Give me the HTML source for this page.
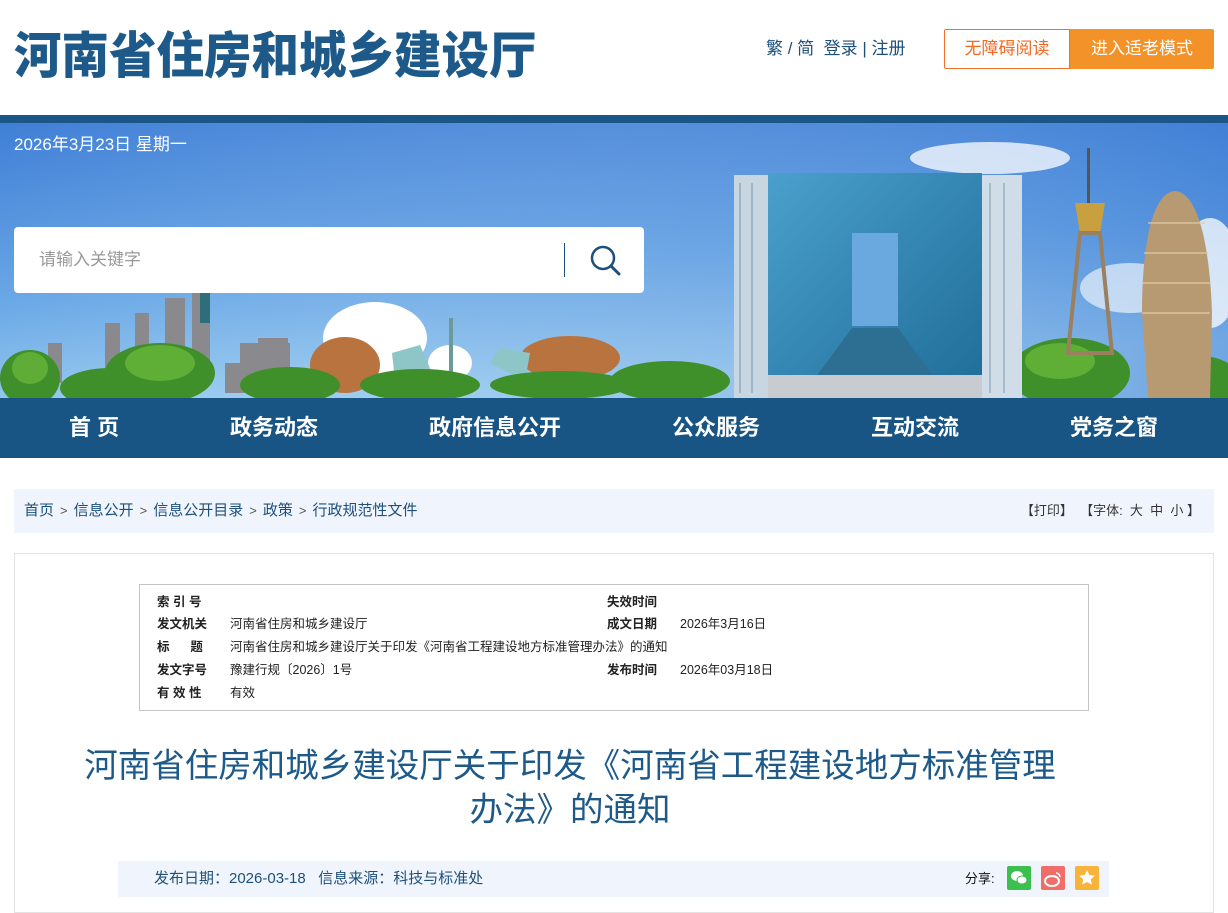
<!DOCTYPE html>
<html><head><meta charset="utf-8"><style>
*{margin:0;padding:0;box-sizing:border-box}
body{width:1228px;height:905px;overflow:hidden;background:#fff;font-family:"Liberation Sans","Noto Sans CJK SC",sans-serif;position:relative}
.abs{position:absolute}
.logo{left:14px;top:20px;font-family:"Noto Sans CJK SC",sans-serif;font-weight:900;font-size:50px;color:#1d5a8a;line-height:64px;transform:scaleX(0.95);transform-origin:left;white-space:nowrap}
.tl{top:37px;left:766px;font-size:17px;color:#1d4f7c;line-height:24px}
.btn1{left:944px;top:29px;width:126px;height:40px;border:1px solid #f0722a;color:#f06a24;font-size:17px;text-align:center;line-height:38px;border-radius:2px 0 0 2px}
.btn2{left:1070px;top:29px;width:144px;height:40px;background:#f4922a;color:#fff;font-size:17px;text-align:center;line-height:40px;border-radius:0 2px 2px 0}
.bar{left:0;top:115px;width:1228px;height:8px;background:#1a5687}
.nav{left:0;top:398px;width:1228px;height:60px;background:#185585}
.nav span{position:absolute;top:0;line-height:60px;color:#fff;font-weight:bold;font-size:22px}
.crumb{left:14px;top:489px;width:1200px;height:44px;background:#f0f5fd;font-size:15px;color:#1d4f7c;line-height:44px;padding-left:10px}
.crumb b{font-weight:normal;color:#555;margin:0 6px;font-size:13px}
.tools{right:28px;top:489px;line-height:44px;font-size:13px;color:#333;position:absolute}
.box{left:14px;top:553px;width:1200px;height:360px;border:1px solid #e3e3e3}
.info{left:139px;top:584px;width:950px;height:127px;border:1px solid #c4c4c4;font-size:12.5px;color:#222}
.info div{position:absolute;line-height:20px;white-space:nowrap}
.info .k{font-weight:bold}
.title{left:0;top:745px;width:1140px;text-align:center;font-size:33.5px;color:#1d5a8a;line-height:44px;white-space:nowrap}
.meta{left:118px;top:861px;width:991px;height:36px;background:#f0f5fd;font-size:15px;color:#1d4f7c;line-height:36px;padding-left:36px}
.ic{position:absolute;top:866px;width:24px;height:24px;border-radius:2px}
</style></head><body>
<div class="abs logo">河南省住房和城乡建设厅</div>
<div class="abs tl">繁 / 简 &nbsp;登录 | 注册</div>
<div class="abs btn1">无障碍阅读</div>
<div class="abs btn2">进入适老模式</div>
<div class="abs bar"></div>
<svg class="abs" style="left:0;top:123px" width="1228" height="275" viewBox="0 0 1228 275">
<defs><linearGradient id="sky" x1="0" y1="0" x2="0.3" y2="1"><stop offset="0" stop-color="#3f7fd6"/><stop offset="0.6" stop-color="#6aa8e6"/><stop offset="1" stop-color="#9ccdf0"/></linearGradient>
<linearGradient id="sky2" x1="0" y1="0" x2="1" y2="0"><stop offset="0" stop-color="#fff" stop-opacity="0"/><stop offset="1" stop-color="#1f5fc8" stop-opacity="0.35"/></linearGradient>
<linearGradient id="glass" x1="0" y1="0" x2="1" y2="1"><stop offset="0" stop-color="#4aa0cc"/><stop offset="1" stop-color="#1f6c98"/></linearGradient></defs>
<rect width="1228" height="275" fill="url(#sky)"/><rect width="1228" height="275" fill="url(#sky2)"/>
<ellipse cx="990" cy="35" rx="80" ry="16" fill="#fff" opacity="0.75"/>
<ellipse cx="1210" cy="150" rx="30" ry="55" fill="#fff" opacity="0.75"/>
<ellipse cx="1130" cy="165" rx="50" ry="25" fill="#fff" opacity="0.6"/>
<ellipse cx="375" cy="215" rx="52" ry="36" fill="#fff"/>
<ellipse cx="450" cy="240" rx="22" ry="18" fill="#fff"/>
<g fill="#8a8a8e"><rect x="48" y="220" width="14" height="40"/><rect x="105" y="200" width="15" height="60"/><rect x="135" y="190" width="14" height="70"/><rect x="165" y="175" width="20" height="85"/><rect x="192" y="165" width="18" height="97"/><rect x="225" y="240" width="25" height="30"/><rect x="240" y="220" width="50" height="50"/><rect x="258" y="215" width="30" height="55"/></g>
<rect x="200" y="165" width="10" height="35" fill="#2e6e7a"/>
<ellipse cx="345" cy="242" rx="35" ry="28" fill="#b8733f"/>
<ellipse cx="570" cy="235" rx="50" ry="22" fill="#b8733f"/>
<path d="M392 230 L420 222 L432 250 L395 258Z" fill="#8ec6c8"/>
<path d="M490 240 L500 225 L530 230 L525 258Z" fill="#8ec6c8"/>
<rect x="449" y="195" width="4" height="65" fill="#6a9a9a"/>
<g fill="#3f8f2a"><ellipse cx="30" cy="255" rx="30" ry="28"/><ellipse cx="160" cy="250" rx="55" ry="30"/><ellipse cx="110" cy="265" rx="50" ry="20"/><ellipse cx="290" cy="262" rx="50" ry="18"/><ellipse cx="420" cy="262" rx="60" ry="16"/><ellipse cx="560" cy="262" rx="70" ry="14"/><ellipse cx="670" cy="258" rx="60" ry="20"/><ellipse cx="1070" cy="250" rx="60" ry="35"/><ellipse cx="1200" cy="258" rx="40" ry="25"/></g>
<g fill="#68b53a" opacity="0.8"><ellipse cx="160" cy="240" rx="35" ry="18"/><ellipse cx="1060" cy="238" rx="35" ry="18"/><ellipse cx="30" cy="245" rx="18" ry="16"/></g>
<rect x="734" y="52" width="34" height="223" fill="#c8d6e2"/>
<rect x="982" y="52" width="40" height="223" fill="#d0dde8"/>
<rect x="768" y="50" width="214" height="225" fill="url(#glass)"/>
<rect x="852" y="110" width="46" height="93" fill="#6aa8e0"/>
<path d="M815 255 L852 205 L898 205 L935 255Z" fill="#2d6f92"/>
<rect x="768" y="252" width="214" height="23" fill="#c8ccd0"/>
<g stroke="#3e6e8e" stroke-width="1" opacity="0.6"><line x1="740" y1="60" x2="740" y2="270"/><line x1="752" y1="60" x2="752" y2="270"/><line x1="990" y1="60" x2="990" y2="270"/><line x1="1004" y1="60" x2="1004" y2="270"/></g>
<rect x="1087" y="25" width="3" height="55" fill="#555"/>
<path d="M1075 80 L1105 80 L1100 110 L1080 110Z" fill="#c9a040"/>
<path d="M1080 110 L1100 110 L1112 230 L1068 230Z" fill="none" stroke="#9a8060" stroke-width="4"/>
<path d="M1175 68 C1200 70 1210 130 1212 190 L1210 275 L1148 275 L1142 190 C1142 130 1150 70 1175 68Z" fill="#b89a72"/>
<g stroke="#e0cca8" stroke-width="2" opacity="0.6"><line x1="1148" y1="100" x2="1205" y2="100"/><line x1="1144" y1="130" x2="1208" y2="130"/><line x1="1142" y1="160" x2="1210" y2="160"/><line x1="1142" y1="190" x2="1210" y2="190"/></g>
</svg>
<div class="abs" style="left:14px;top:133px;color:#fff;font-size:17px;line-height:24px">2026年3月23日 星期一</div>
<div class="abs" style="left:14px;top:227px;width:630px;height:66px;background:#fff;border-radius:4px">
<div class="abs" style="left:25px;top:0;line-height:66px;font-size:17px;color:#999">请输入关键字</div>
<div class="abs" style="left:550px;top:16px;width:1px;height:34px;background:#1d4f7c"></div>
<svg class="abs" style="left:574px;top:16px" width="36" height="36" viewBox="0 0 36 36"><circle cx="15" cy="15" r="11" fill="none" stroke="#1d4f7c" stroke-width="2.5"/><line x1="23" y1="23" x2="31" y2="31" stroke="#1d4f7c" stroke-width="3" stroke-linecap="round"/></svg>
</div>
<div class="abs nav"><span style="left:69px">首 页</span><span style="left:230px">政务动态</span><span style="left:429px">政府信息公开</span><span style="left:672px">公众服务</span><span style="left:871px">互动交流</span><span style="left:1070px">党务之窗</span></div>
<div class="abs crumb">首页<b>&gt;</b>信息公开<b>&gt;</b>信息公开目录<b>&gt;</b>政策<b>&gt;</b>行政规范性文件</div>
<div class="tools">【打印】 &nbsp;【字体: &nbsp;大 &nbsp;中 &nbsp;小 】</div>
<div class="abs box"></div>
<div class="abs info">
<div class="k" style="left:17px;top:7px">索 引 号</div>
<div class="k" style="left:467px;top:7px">失效时间</div>
<div class="k" style="left:17px;top:29px">发文机关</div><div style="left:90px;top:29px">河南省住房和城乡建设厅</div>
<div class="k" style="left:467px;top:29px">成文日期</div><div style="left:540px;top:29px">2026年3月16日</div>
<div class="k" style="left:17px;top:52px">标 &nbsp; &nbsp; &nbsp;题</div><div style="left:90px;top:52px">河南省住房和城乡建设厅关于印发《河南省工程建设地方标准管理办法》的通知</div>
<div class="k" style="left:17px;top:75px">发文字号</div><div style="left:90px;top:75px">豫建行规〔2026〕1号</div>
<div class="k" style="left:467px;top:75px">发布时间</div><div style="left:540px;top:75px">2026年03月18日</div>
<div class="k" style="left:17px;top:98px">有 效 性</div><div style="left:90px;top:98px">有效</div>
</div>
<div class="abs title">河南省住房和城乡建设厅关于印发《河南省工程建设地方标准管理<br>办法》的通知</div>
<div class="abs meta">发布日期：2026-03-18 &nbsp; 信息来源：科技与标准处</div>
<div class="abs" style="left:965px;top:861px;line-height:36px;font-size:13px;color:#111">分享:</div>
<div class="ic" style="left:1007px;background:#3cbf4c"><svg width="24" height="24"><ellipse cx="10" cy="10" rx="6" ry="5" fill="#fff"/><ellipse cx="15" cy="14" rx="5" ry="4" fill="#fff" stroke="#3cbf4c"/></svg></div>
<div class="ic" style="left:1041px;background:#f06e6a"><svg width="24" height="24"><ellipse cx="11" cy="15" rx="7" ry="5" fill="none" stroke="#fff" stroke-width="2"/><path d="M15 7a4 4 0 0 1 4 4" stroke="#fff" fill="none" stroke-width="1.5"/></svg></div>
<div class="ic" style="left:1075px;background:#f8b33a"><svg width="24" height="24"><path d="M12 4l2.4 5 5.4.6-4 3.7 1.1 5.3L12 16l-4.9 2.6 1.1-5.3-4-3.7 5.4-.6z" fill="#fff"/></svg></div>
</body></html>
